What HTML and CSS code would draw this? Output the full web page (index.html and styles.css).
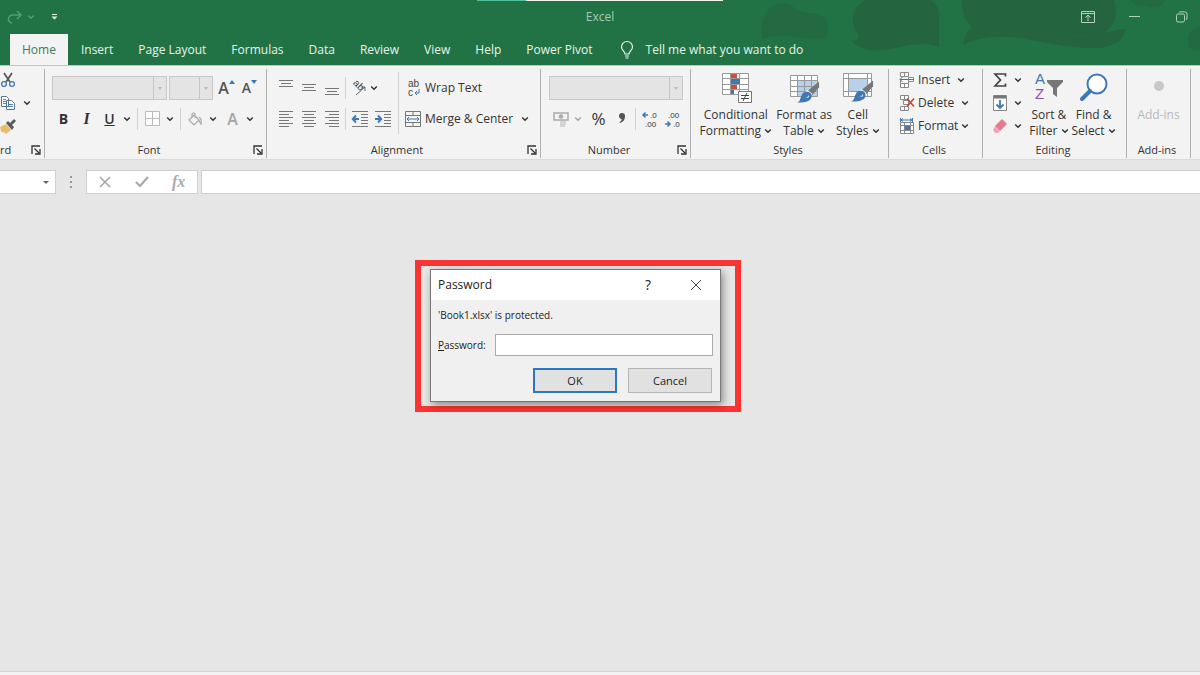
FILE: index.html
```
<!DOCTYPE html>
<html lang="en">
<head>
<meta charset="utf-8">
<title>Excel</title>
<link rel="stylesheet" href="styles.css">
</head>

<body>
	<!-- shared icons -->
	<svg class="defs" width="0" height="0">
		<symbol id="chev" viewBox="0 0 8 8"><path d="M1.2 2.5 4 5.2 6.8 2.5" fill="none" stroke="currentColor" stroke-width="1.5"/></symbol>
		<symbol id="launcher" viewBox="0 0 10 10"><path d="M1 9V1h8M3.5 3.5l4.5 4.5M9 4v5H4" fill="none" stroke="#333" stroke-width="1.3"/></symbol>
		<symbol id="brush" viewBox="0 0 24 22"><path d="M23 0v6l-7 8-5-4z" fill="#777"/><path d="M11 9l5 4-2 2-5-4z" fill="#fff"/><path d="M9 11c4-1 7 2 6 6-2 5-9 5-15 5 4-2 3-4 5-8 1-2 2-3 4-3z" fill="#3f78b4"/><path d="M7 17q4 1 5-3 2 4-5 3z" fill="#fff"/></symbol>
	</svg>

	<header class="top">
		<svg class="art" viewBox="0 0 500 66" width="500" height="66">
			<g fill="#24643f">
				<path opacity=".6" d="M62 36c-2-14 4-32 20-33 12 0 14 10 26 10 16 0 22 8 20 18 0 8-8 10-28 7-14-2-24-4-38 1z"/>
				<path d="M165 0h65c10 5 10 14 9 24v23c-14-6-30-2-44 1-16 4-34 4-44-8 10 2 8-4 5-9-6-12-4-23 9-31z"/>
				<path d="M262 0h152c4 14 2 26-12 34-12 3-20 1-30 2 24 3 42-8 53-7 0 10-9 17-26 19-28 1-54-6-80-10-26-3-42 0-56 7 1-7 4-14 9-19-8-6-10-14-10-26z"/>
				<path opacity=".6" d="M430 0h35c-3 10-14 8-20 6-5-1-12 0-15-6zM500 26c-12 3-14 12-10 23l10 2z"/>
			</g>
		</svg>
		<div class="progress"><span></span></div>
		<div class="titlebar">
			<div class="quick">
				<button class="faded" aria-label="Redo"><svg width="16" height="14" viewBox="0 0 16 14" fill="none" stroke="currentColor" stroke-width="1.6"><path d="M14 5H6a4 4 0 0 0-1 8M10 1l4 4-4 4"/></svg></button>
				<button class="faded" aria-label="Redo options"><svg width="8" height="8"><use href="#chev"/></svg></button>
				<button class="more" aria-label="Customize toolbar"><svg width="7" height="6" fill="currentColor"><path d="M1 0h5v1H1zM.5 2.500h6l-3 3z"/></svg></button>
			</div>
			<span class="app">Excel</span>
			<div class="window-buttons">
				<button aria-label="Ribbon display options"><svg width="14" height="12" viewBox="0 0 14 12" fill="none" stroke="currentColor"><path d="M.5.5h13v11H.5zM.5 2.500h13M7 10V4.500M4.500 6.500 7 4l2.500 2.500"/></svg></button>
				<button aria-label="Minimize"><svg width="11" height="12" stroke="currentColor"><path d="M0 5.500h11"/></svg></button>
				<button aria-label="Restore"><svg width="12" height="12" fill="none" stroke="currentColor"><rect x=".5" y="3" width="8" height="8" rx="1.500"/><path d="M3 1.500Q3.500.8 5 .8h3.500q2.500 0 2.500 2.500V7q0 1.500-1 2"/></svg></button>
			</div>
		</div>
		<nav class="tabs">
			<a class="active" href="#">Home</a>
			<a href="#">Insert</a>
			<a href="#">Page Layout</a>
			<a href="#">Formulas</a>
			<a href="#">Data</a>
			<a href="#">Review</a>
			<a href="#">View</a>
			<a href="#">Help</a>
			<a href="#">Power Pivot</a>
			<a class="tell" href="#"><svg width="14" height="18" viewBox="0 0 14 18" fill="none" stroke="currentColor" stroke-width="1.2"><path d="M5 13c0-3-3.500-3.500-3.500-7a5.500 5.500 0 0 1 11 0c0 3.500-3.500 4-3.500 7zM5 15h4M5.500 17h3"/></svg>Tell me what you want to do</a>
		</nav>
	</header>

	<section class="ribbon">
		<div class="group clipboard">
			<div class="body stack">
				<button aria-label="Cut"><svg width="16" height="16" viewBox="0 0 16 16" fill="none"><path d="M4 1l6 9M12 1 6 10" stroke="#555" stroke-width="1.7"/><circle cx="4" cy="12" r="2.400" stroke="#3f78b4" stroke-width="1.300"/><circle cx="12" cy="12" r="2.400" stroke="#3f78b4" stroke-width="1.300"/></svg></button>
				<button aria-label="Copy"><svg width="16" height="16" viewBox="0 0 16 16" fill="#fff" stroke="#5d7690"><path d="M1.500 1.500h5l2 2v8h-7zM6.500 5.500h5l3 3v6h-8z"/><path d="M3 4.500h3M3 6.500h3M3 8.500h3M8 9.500h5M8 11.500h5" stroke="#4b84bd"/></svg><svg class="gap" width="8" height="8"><use href="#chev"/></svg></button>
				<button aria-label="Format Painter"><svg width="16" height="16" viewBox="0 0 16 16"><path d="M0 9l6-3 5 6-5 4-2-2-1 1-2-2z" fill="#e9bd6c"/><path d="M6 5l2-2 2 2 4-4 2 2-4 4 2 2-2 3z" fill="#595959"/></svg></button>
			</div>
			<div class="footer"><span>rd</span><button aria-label="Clipboard settings"><svg width="10" height="10"><use href="#launcher"/></svg></button></div>
		</div>

		<div class="group font">
			<div class="body rows">
				<div class="row">
					<span class="combo name"><select aria-label="Font" disabled><option></option></select></span>
					<span class="combo size"><select aria-label="Font size" disabled><option></option></select></span>
					<button class="tool" aria-label="Increase font size"><span class="letter">A</span><svg class="caret" width="6" height="4" fill="#3f78b4"><path d="M0 4l3-4 3 4z"/></svg></button>
					<button class="tool" aria-label="Decrease font size"><span class="letter small">A</span><svg class="caret" width="6" height="4" fill="#3f78b4"><path d="M0 0l3 4 3-4z"/></svg></button>
				</div>
				<div class="row">
					<button class="tool bold">B</button>
					<button class="tool italic">I</button>
					<button class="tool under">U</button>
					<button class="drop" aria-label="Underline options"><svg width="8" height="8"><use href="#chev"/></svg></button>
					<i class="sep wide"></i>
					<button class="tool" aria-label="Borders"><svg width="16" height="16" fill="#fff" stroke="#bbb"><path d="M.5.5h14v14H.5zM7.500.5v14M.5 7.500h14"/></svg></button>
					<button class="drop" aria-label="Border options"><svg width="8" height="8"><use href="#chev"/></svg></button>
					<i class="sep wide"></i>
					<button class="tool" aria-label="Fill color"><svg width="15" height="15" viewBox="0 0 15 15" fill="none" stroke="#aaa" stroke-width="1.200"><path d="M6 3l5 5-5 5-5-5zM4 6V2q1.500-2 3 0v4M11 5q3 2 2 7-2-2-2-4"/></svg></button>
					<button class="drop" aria-label="Fill options"><svg width="8" height="8"><use href="#chev"/></svg></button>
					<button class="tool pale after">A</button>
					<button class="drop" aria-label="Font color options"><svg width="8" height="8"><use href="#chev"/></svg></button>
				</div>
			</div>
			<div class="footer"><span>Font</span><button aria-label="Font settings"><svg width="10" height="10"><use href="#launcher"/></svg></button></div>
		</div>

		<div class="group align">
			<div class="body split">
				<div class="rows">
					<div class="row">
						<button class="tool" aria-label="Top align"><svg width="14" height="16" stroke="#777"><path d="M0 .5h14M2 3.500h10M0 6.500h14"/></svg></button>
						<button class="tool" aria-label="Middle align"><svg width="14" height="16" stroke="#777"><path d="M0 4.500h14M2 7.500h10M0 10.500h14"/></svg></button>
						<button class="tool" aria-label="Bottom align"><svg width="14" height="16" stroke="#777"><path d="M0 8.500h14M2 11.500h10M0 14.500h14"/></svg></button>
						<i class="sep"></i>
						<button class="tool" aria-label="Orientation"><svg width="15" height="15" viewBox="0 0 15 15"><text x="-1" y="6" transform="rotate(45 4 6)" font-size="10" fill="#444">ab</text><path d="M4 14l9-8M13 10V6H9" fill="none" stroke="#666"/></svg></button>
						<button class="drop near" aria-label="Orientation options"><svg width="8" height="8"><use href="#chev"/></svg></button>
					</div>
					<div class="row">
						<button class="tool" aria-label="Align left"><svg width="14" height="16" stroke="#777"><path d="M0 .5h14M0 3.500h10M0 6.500h14M0 9.500h10M0 12.500h14M0 15.500h10"/></svg></button>
						<button class="tool" aria-label="Center"><svg width="14" height="16" stroke="#777"><path d="M0 .5h14M2 3.500h10M0 6.500h14M2 9.500h10M0 12.500h14M2 15.500h10"/></svg></button>
						<button class="tool" aria-label="Align right"><svg width="14" height="16" stroke="#777"><path d="M0 .5h14M4 3.500h10M0 6.500h14M4 9.500h10M0 12.500h14M4 15.500h10"/></svg></button>
						<i class="sep"></i>
						<button class="tool" aria-label="Decrease indent"><svg width="16" height="16" fill="none" stroke="#777"><path d="M0 .5h16M9 3.500h7M9 6.500h7M9 9.500h7M9 12.500h7M0 15.500h16"/><path d="M7 8H1M4 4.500.8 8 4 11.500" stroke="#3f78b4" stroke-width="2"/></svg></button>
						<button class="tool" aria-label="Increase indent"><svg width="16" height="16" fill="none" stroke="#777"><path d="M0 .5h16M9 3.500h7M9 6.500h7M9 9.500h7M9 12.500h7M0 15.500h16"/><path d="M0 8h6M3 4.500 6.200 8 3 11.500" stroke="#3f78b4" stroke-width="2"/></svg></button>
					</div>
				</div>
				<i class="sep tall"></i>
				<div class="rows">
					<button class="label-btn"><svg width="16" height="18" viewBox="0 0 16 18"><text x="3" y="8" font-size="10" fill="#444">ab</text><text x="3" y="17" font-size="10" fill="#444">c</text><path d="M14 10v4h-4M12 12l-2 2 2 2" fill="none" stroke="#3f78b4"/></svg>Wrap Text</button>
					<button class="label-btn"><svg width="16" height="16" fill="none" stroke="#777"><path d="M.5.500h15v15H.5zM8 .500v4M8 12v3.500M.5 4.500h15M.5 11.500h15"/><path d="M2 8h12M4 6 2 8l2 2M12 6l2 2-2 2" stroke="#3f78b4"/></svg>Merge &amp; Center<svg class="gap" width="8" height="8"><use href="#chev"/></svg></button>
				</div>
			</div>
			<div class="footer"><span>Alignment</span><button aria-label="Alignment settings"><svg width="10" height="10"><use href="#launcher"/></svg></button></div>
		</div>

		<div class="group number">
			<div class="body rows">
				<div class="row"><span class="combo format"><select aria-label="Number format" disabled><option></option></select></span></div>
				<div class="row">
					<button class="tool" aria-label="Accounting format"><svg width="16" height="16" viewBox="0 0 16 16" fill="none" stroke="#aaa" stroke-width="1.500"><path d="M1 2h14v7H1z"/><circle cx="8" cy="5.500" r="1.500" fill="#aaa"/><path d="M7 11h6M7 13h6M7 15h5" stroke="#ccc"/></svg></button>
					<button class="drop dim" aria-label="Accounting options"><svg width="8" height="8"><use href="#chev"/></svg></button>
					<button class="tool percent">%</button>
					<button class="tool comma" aria-label="Comma style"><svg width="8" height="12" fill="#555"><path d="M1 3a3 3 0 0 1 6 0c0 4-2 6-5 7l-.5-1c1.500-.7 2-1.500 2.200-3A3 3 0 0 1 1 3z"/></svg></button>
					<i class="sep"></i>
					<button class="tool" aria-label="Increase decimal"><svg width="18" height="18" viewBox="0 0 18 18"><path d="M7 5H2M4.500 2.500 2 5l2.500 2.500" fill="none" stroke="#3f78b4" stroke-width="1.500"/><text x="9" y="8" font-size="8" fill="#333">.0</text><text x="4" y="17" font-size="8" fill="#333">.00</text></svg></button>
					<button class="tool" aria-label="Decrease decimal"><svg width="18" height="18" viewBox="0 0 18 18"><path d="M1 14h5M3.500 11.500 6 14l-2.500 2.500" fill="none" stroke="#3f78b4" stroke-width="1.500"/><text x="4" y="8" font-size="8" fill="#333">.00</text><text x="9" y="17" font-size="8" fill="#333">.0</text></svg></button>
				</div>
			</div>
			<div class="footer"><span>Number</span><button aria-label="Number settings"><svg width="10" height="10"><use href="#launcher"/></svg></button></div>
		</div>

		<div class="group styles">
			<div class="body big-row">
				<button class="big">
					<svg width="32" height="32" viewBox="0 0 32 32"><path d="M2.500 1.500h26v21h-26zM10.500 1.500v21M19.500 1.500v21M2.500 6.500h26M2.500 12.500h26M2.500 17.500h26" fill="#fff" stroke="#999"/><path d="M11 2h6v4h-6zM11 13h6v4h-6z" fill="#c8503c"/><path d="M11 7h9v5h-9zM11 18h3v4h-3z" fill="#3f78b4"/><path d="M18.500 19.500h13v11h-13z" fill="#fff" stroke="#777"/><path d="M21 23.500h8M21 26.500h8M27 21l-4 8" stroke="#444"/></svg>
					<span>Conditional<br>Formatting <svg width="8" height="8"><use href="#chev"/></svg></span>
				</button>
				<button class="big">
					<svg width="32" height="32" viewBox="0 0 32 32"><path d="M2.500 3.500h27v21h-27z" fill="#fff"/><path d="M9 9h20v16H9z" fill="#b8d1ea"/><path d="M2.500 3.500h27v21h-27zM9.500 3.500v21M16.500 3.500v21M23.500 3.500v21M2.500 8.500h27M2.500 14.500h27M2.500 19.500h27" fill="none" stroke="#999"/><use href="#brush" x="9" y="9" width="23" height="22"/></svg>
					<span>Format as<br>Table <svg width="8" height="8"><use href="#chev"/></svg></span>
				</button>
				<button class="big">
					<svg width="32" height="32" viewBox="0 0 32 32"><path d="M1.500 1.500h28v23h-28zM6.500 1.500v23M1.500 6.500h28M25.500 1.500v23M1.500 19.500h28" fill="#fff" stroke="#999"/><path d="M7 7h18v12H7z" fill="#b8d1ea"/><use href="#brush" x="9" y="8" width="23" height="22"/></svg>
					<span>Cell<br>Styles <svg width="8" height="8"><use href="#chev"/></svg></span>
				</button>
			</div>
			<div class="footer"><span>Styles</span></div>
		</div>

		<div class="group cells">
			<div class="body stack">
				<button><svg width="16" height="16" fill="#fff" stroke="#888"><path d="M1.500.5h8v4h-8zM5.500.5v4M1.500 11.500h8v4h-8zM5.500 11.500v4M1.500 8v3.500h8V8M9.500 5.500h5v4h-5z"/><path d="M9 7.500H1M3.500 5 1 7.500 3.500 10M9.500 7.500h5" stroke="#3f78b4" fill="none"/></svg>Insert<svg class="gap" width="8" height="8"><use href="#chev"/></svg></button>
				<button><svg width="16" height="16" fill="#fff" stroke="#888"><path d="M1.500.5h8v4h-8zM5.500.5v4M1.500 11.500h8v4h-8zM5.500 11.500v4M4.500 5.500h5v4h-5z"/><path d="M8 3.500l7 8M15 3.500l-7 8" stroke="#d8412f" stroke-width="1.600"/></svg>Delete<svg class="gap" width="8" height="8"><use href="#chev"/></svg></button>
				<button><svg width="16" height="16" fill="#fff" stroke="#888"><path d="M1.500 4.500h13v11h-13zM5.500 4.500v11M11.500 4.500v11M1.500 7.500h13M1.500 12.500h13"/><path d="M6 8h5v4H6z" fill="#3f78b4" stroke="none"/><path d="M2 2h11M4 .500 2 2l2 1.500M11 .500 13 2l-2 1.500M1.500 0v4M13.500 0v4" stroke="#3f78b4" fill="none"/></svg>Format<svg width="8" height="8"><use href="#chev"/></svg></button>
			</div>
			<div class="footer"><span>Cells</span></div>
		</div>

		<div class="group editing">
			<div class="body big-row">
				<div class="stack">
					<button aria-label="AutoSum"><svg width="14" height="16" fill="none" stroke="#444" stroke-width="1.700"><path d="M12.500 4.500V2H2l5.500 6L2 14h10.500v-2.500"/></svg><svg class="gap" width="8" height="8"><use href="#chev"/></svg></button>
					<button aria-label="Fill"><svg width="14" height="16" fill="#fff" stroke="#888"><path d="M.5.500h13v15H.5z"/><path d="M1 2h12" stroke="#777" stroke-width="3"/><path d="M7 5v8M3.500 9.500 7 13l3.500-3.500" fill="none" stroke="#3f78b4" stroke-width="1.800"/></svg><svg class="gap" width="8" height="8"><use href="#chev"/></svg></button>
					<button aria-label="Clear"><svg width="14" height="16" viewBox="0 0 14 16"><path d="M9 1l5 5-7 7-5-5z" fill="#e5798f"/><path d="M2 8l5 5-2 2H2l-2-3z" fill="#efa5b3"/></svg><svg class="gap" width="8" height="8"><use href="#chev"/></svg></button>
				</div>
				<button class="big">
					<svg width="32" height="32" viewBox="0 0 32 32"><text x="2" y="12" font-size="15" fill="#3f78b4">A</text><text x="2" y="27" font-size="15" fill="#8e4fb5">Z</text><path d="M14 8h16v2l-6 6v9l-4-3v-6l-6-6z" fill="#777"/></svg>
					<span>Sort &amp;<br>Filter <svg width="8" height="8"><use href="#chev"/></svg></span>
				</button>
				<button class="big">
					<svg width="32" height="32" viewBox="0 0 32 32" fill="none" stroke="#3f78b4"><circle cx="19" cy="12" r="9.500" fill="#fff" stroke-width="2"/><path d="M12 19l-8 8" stroke-width="4" stroke-linecap="round"/></svg>
					<span>Find &amp;<br>Select <svg width="8" height="8"><use href="#chev"/></svg></span>
				</button>
			</div>
			<div class="footer"><span>Editing</span></div>
		</div>

		<div class="group addins">
			<div class="body big-row">
				<button class="big" disabled>
					<svg width="32" height="32"><circle cx="16" cy="14" r="5" fill="#c8c8c8"/></svg>
					<span>Add-ins</span>
				</button>
			</div>
			<div class="footer"><span>Add-ins</span></div>
		</div>
	</section>

	<div class="formula-bar">
		<span class="namebox"><input type="text" aria-label="Name box"></span>
		<svg width="4" height="12" fill="#999"><path d="M1 0h2v2H1zM1 5h2v2H1zM1 10h2v2H1z"/></svg>
		<div class="formula-tools">
			<button aria-label="Cancel entry"><svg width="12" height="12" stroke="#aaa" stroke-width="1.700"><path d="M1 1l10 10M11 1 1 11"/></svg></button>
			<button aria-label="Confirm entry"><svg width="14" height="12" fill="none" stroke="#aaa" stroke-width="2.200"><path d="M1 6l4 4 8-9"/></svg></button>
			<button class="fx">fx</button>
		</div>
		<input class="formula" type="text" aria-label="Formula">
	</div>

	<main class="workspace">
		<div class="highlight">
			<form class="dialog">
				<div class="dialog-title">
					<span>Password</span>
					<button type="button" class="help">?</button>
					<button type="button" aria-label="Close"><svg width="12" height="12" stroke="#444"><path d="M1 1l10 10M11 1 1 11"/></svg></button>
				</div>
				<div class="dialog-body">
					<p>'Book1.xlsx' is protected.</p>
					<div class="field">
						<label for="password"><u>P</u>assword:</label>
						<input type="password" id="password">
					</div>
					<div class="actions">
						<button class="ok">OK</button>
						<button type="button">Cancel</button>
					</div>
				</div>
			</form>
		</div>
	</main>
	<footer class="status"></footer>
</body>
</html>
```
FILE: styles.css
```
* {
	box-sizing: border-box;
}
body {
	margin: 0;
	min-height: 100vh;
	display: flex;
	flex-direction: column;
	background: #e6e6e6;
	color: #333;
	font: 12px/16px "Open Sans", "Noto Sans", sans-serif;
	overflow: hidden;
}
button, input, select {
	font: inherit;
	color: inherit;
}
button {
	display: flex;
	align-items: center;
	justify-content: center;
	padding: 0;
	border: 0;
	background: none;
	white-space: nowrap;
}
svg {
	flex: none;
	overflow: visible;
}
svg text {
	font-family: "Liberation Sans", sans-serif;
}
.defs {
	position: absolute;
}

/* title bar and tabs */
.top {
	position: relative;
	background: #217346;
	border-bottom: 1px solid #b5cbbd;
	color: #e8f3ec;
}
.art {
	position: absolute;
	top: 0;
	right: 0;
	overflow: hidden;
}
.progress {
	position: absolute;
	top: 0;
	left: 50%;
	width: 246px;
	height: 1px;
	margin-left: -123px;
	background: #f0f5f2;
}
.progress span {
	display: block;
	width: 49px;
	height: 1px;
	background: #4fc3a0;
}
.titlebar {
	position: relative;
	display: grid;
	grid-template-columns: 1fr auto 1fr;
	align-items: center;
	height: 34px;
}
.quick {
	display: flex;
	align-items: center;
	padding-left: 7px;
	gap: 4px;
}
.quick .faded {
	color: #559a73;
}
.quick .more {
	margin-left: 12px;
}
.app {
	color: #a5cbb4;
}
.window-buttons {
	display: flex;
	justify-content: flex-end;
	margin-right: -5px;
	color: #b4d0bf;
}
.window-buttons button {
	width: 47px;
	height: 32px;
}
.tabs {
	position: relative;
	display: flex;
	gap: 1px;
	padding-left: 10px;
}
.tabs a {
	padding: 8px 12px 7px;
	color: inherit;
	text-decoration: none;
	white-space: nowrap;
}
.tabs .active {
	background: #f3f3f3;
	color: #3a7d58;
}
.tabs .tell {
	display: flex;
	align-items: center;
	gap: 12px;
	height: 31px;
	padding-left: 14px;
}

/* ribbon */
.ribbon {
	display: flex;
	padding: 3px 0 1px;
	background: #f3f3f3;
	border-bottom: 1px solid #dadada;
}
.group {
	display: flex;
	flex: none;
	flex-direction: column;
	border-right: 1px solid #b0b0b0;
	min-height: 89px;
}
.body {
	flex: 1;
}
.footer {
	display: flex;
	align-items: center;
	height: 16px;
	padding-right: 3px;
	font-size: 11px;
}
.footer span {
	flex: 1;
	text-align: center;
}
.clipboard {
	width: 45px;
}
.clipboard .footer span {
	text-align: left;
}
.font {
	width: 222px;
}
.align {
	width: 274px;
}
.number {
	width: 150px;
}
.font .body, .align .body {
	padding-left: 7px;
}
.number .body {
	padding-left: 8px;
}
.styles {
	width: 198px;
}
.cells {
	width: 94px;
}
.editing {
	width: 144px;
}
.addins {
	width: 64px;
}
.rows {
	display: flex;
	flex-direction: column;
	gap: 7px;
	padding-top: 7px;
}
.split {
	display: flex;
}
.row {
	display: flex;
	align-items: center;
	height: 24px;
}
.stack {
	display: flex;
	flex-direction: column;
	align-items: flex-start;
	gap: 7px;
	padding-top: 3px;
}
.stack button {
	height: 16px;
	gap: 3px;
}
.gap {
	margin-left: 4px;
}
.cells .stack {
	padding-left: 10px;
}
.combo {
	position: relative;
	margin-right: 2px;
}
.combo select {
	display: block;
	width: 100%;
	height: 24px;
	border: 1px solid #c6c6c6;
	background: #e4e4e4;
	appearance: none;
	opacity: 1;
}
.combo::before {
	content: "";
	position: absolute;
	top: 1px;
	right: 13px;
	bottom: 1px;
	border-left: 1px solid #c6c6c6;
}
.combo::after {
	content: "";
	position: absolute;
	top: 11px;
	right: 5px;
	border: 2px solid transparent;
	border-top: 3px solid #bbb;
}
.combo.name {
	width: 115px;
}
.combo.size {
	width: 44px;
}
.combo.format {
	width: 134px;
}
.tool {
	width: 23px;
	height: 24px;
	font-size: 14px;
}
.drop {
	width: 12px;
	height: 24px;
}
.near {
	margin-left: -3px;
}
.dim, .pale {
	color: #a5a5a5;
}
.letter {
	font-size: 16px;
	font-weight: 600;
	color: #555;
}
.letter.small {
	font-size: 14px;
}
.caret {
	align-self: flex-start;
	margin-top: 4px;
}
.bold {
	font-weight: 700;
}
.italic {
	font: italic bold 16px "Liberation Serif", serif;
}
.under {
	font-weight: 600;
	text-decoration: underline;
}
.pale {
	font-size: 16px;
	font-weight: 600;
}
.after {
	margin-left: 2px;
}
.percent {
	margin-left: 3px;
	font-size: 17px;
}
.sep {
	width: 1px;
	height: 22px;
	margin: 0 2px;
	background: #d2d2d2;
}
.sep.wide {
	margin: 0 3px 0 4px;
}
.sep.tall {
	height: 62px;
	margin: 3px 6px 0 4px;
}
.label-btn {
	justify-content: flex-start;
	height: 24px;
	gap: 4px;
}
.big-row {
	display: flex;
	justify-content: center;
	align-items: flex-start;
	gap: 4px;
}
.big {
	flex-direction: column;
	padding-top: 3px;
	gap: 3px;
}
.big:disabled {
	color: #b8b8b8;
}
.editing .big-row {
	gap: 3px;
}
.editing .stack {
	margin-right: 4px;
}

/* formula bar */
.formula-bar {
	display: flex;
	align-items: center;
	padding: 10px 0 2px;
}
.formula-bar input {
	height: 24px;
	border: 1px solid #cfcfcf;
	background: #fff;
}
.namebox {
	position: relative;
	width: 56px;
	margin-right: 13px;
}
.namebox input {
	display: block;
	width: 100%;
	border-left: 0;
}
.namebox::after {
	content: "";
	position: absolute;
	top: 11px;
	right: 7px;
	border: 3px solid transparent;
	border-top-color: #666;
}
.formula-tools {
	display: flex;
	width: 112px;
	height: 24px;
	margin: 0 3px 0 13px;
	border: 1px solid #cfcfcf;
	background: #fff;
}
.formula-tools button {
	flex: 1;
}
.fx {
	font: italic bold 16px "Liberation Serif", serif;
	color: #aaa;
}
.formula-bar .formula {
	flex: 1;
	min-width: 0;
	border-right: 0;
}

/* password dialog */
.workspace {
	flex: 1;
	display: flex;
	justify-content: center;
	align-items: flex-start;
	padding: 64px 44px 0 0;
}
.highlight {
	padding: 3px 14px 4px 9px;
	border: 6px solid #fb3333;
}
.dialog {
	width: 291px;
	border: 1px solid #777;
	background: #f0f0f0;
	box-shadow: 2px 3px 8px rgba(0, 0, 0, .4);
	color: #222;
	font-size: 10px;
}
.dialog-title {
	display: flex;
	align-items: center;
	height: 30px;
	padding-left: 7px;
	background: #fff;
	font-size: 12px;
}
.dialog-title span {
	flex: 1;
}
.dialog-title button {
	width: 48px;
	height: 30px;
}
.dialog-title .help {
	font-size: 14px;
}
.dialog-body {
	padding: 7px 7px 8px;
}
.dialog p {
	margin: 0 0 11px;
}
.field {
	display: flex;
	align-items: center;
	justify-content: space-between;
}
.field input {
	width: 218px;
	height: 22px;
	border: 1px solid #aaa;
	background: #fff;
}
.actions {
	display: flex;
	justify-content: flex-end;
	gap: 11px;
	margin: 12px 1px 0 0;
	font-size: 11px;
}
.actions button {
	width: 84px;
	height: 25px;
	border: 1px solid #b5b5b5;
	background: #e1e1e1;
}
.actions .ok {
	border: 2px solid #2a78c4;
}
.status {
	height: 4px;
	border-top: 1px solid #d2d2d2;
	background: #f3f3f3;
}
```
